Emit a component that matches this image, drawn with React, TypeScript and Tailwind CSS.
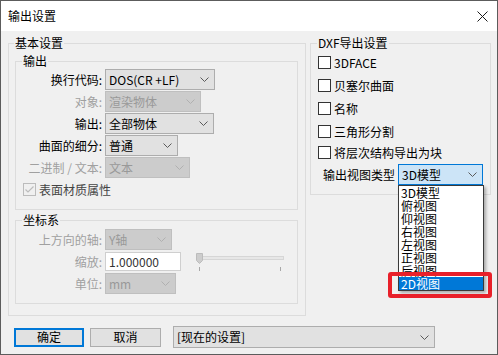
import clsx from "clsx";

function Chevron({ disabled }: { disabled?: boolean }) {
  return (
    <svg width="9" height="5" viewBox="0 0 9 5" className="shrink-0">
      <path
        d="M0.5 0.5 L4.5 4.5 L8.5 0.5"
        fill="none"
        stroke={disabled ? "#b0b0b0" : "#5a5a5a"}
        strokeWidth="1"
      />
    </svg>
  );
}

function Select({
  value,
  className,
  disabled,
}: {
  value: string;
  className: string;
  disabled?: boolean;
}) {
  return (
    <div
      className={clsx(
        "flex h-[21px] items-center justify-between border pl-[3px] pr-[5px] leading-[14px]",
        disabled
          ? "border-[#bfbfbf] bg-[#cccccc] text-[#999999]"
          : "border-[#adadad] bg-[#e1e1e1] text-black",
        className
      )}
    >
      <span>{value}</span>
      <Chevron disabled={disabled} />
    </div>
  );
}

function Row({
  label,
  disabled,
  children,
}: {
  label: string;
  disabled?: boolean;
  children: React.ReactNode;
}) {
  return (
    <div className="flex h-[21px] items-center">
      <span
        className={clsx(
          "w-[88px] pr-[2px] text-right leading-[14px]",
          disabled ? "text-[#a0a0a0]" : "text-black"
        )}
      >
        {label}
      </span>
      <div className="ml-[1px] flex items-center">{children}</div>
    </div>
  );
}

function Checkbox({ label, checked, disabled }: { label: string; checked?: boolean; disabled?: boolean }) {
  return (
    <div className="flex h-[13px] items-center gap-[3px]">
      <div
        className={clsx(
          "flex h-[13px] w-[13px] items-center justify-center border",
          disabled ? "border-[#bcbcbc] bg-[#f0f0f0]" : "border-[#333333] bg-white"
        )}
      >
        {checked && (
          <svg width="11" height="11" viewBox="0 0 11 11">
            <path d="M1.5 5.5 L4 8 L9.5 2.5" fill="none" stroke={disabled ? "#bcbcbc" : "#222"} strokeWidth="1.2" />
          </svg>
        )}
      </div>
      <span className={clsx("leading-[14px]", disabled ? "text-[#444]" : "text-black")}>{label}</span>
    </div>
  );
}

const views = ["3D模型", "俯视图", "仰视图", "右视图", "左视图", "正视图", "后视图", "2D视图"];

export default function App() {
  return (
    <div className="relative box-border h-[355px] w-[498px] overflow-hidden border border-[#5c5c5c] bg-[#f0f0f0] font-['Noto_Sans_CJK_SC',sans-serif] text-[12px] text-black">
      <div className="flex h-[30px] items-center justify-between bg-white pl-[7px] pr-[9px]">
        <span className="leading-[14px]">输出设置</span>
        <svg width="11" height="11" viewBox="0 0 11 11">
          <path d="M0.5 0.5 L10.5 10.5 M10.5 0.5 L0.5 10.5" stroke="#1a1a1a" strokeWidth="1" />
        </svg>
      </div>

      <div className="flex items-start">
        {/* 基本设置 */}
        <fieldset className="ml-[7px] mt-[5px] w-[298px] border border-[#dcdcdc] px-[6px] pb-[11px] pt-[4px]">
          <legend className="-ml-[1px] px-[1px] leading-[14px]">基本设置</legend>

          <fieldset className="w-[283px] border border-[#dcdcdc] pb-[13px] pt-[1px]">
            <legend className="ml-[6px] px-[1px] leading-[14px]">输出</legend>
            <div className="flex flex-col gap-[1px]">
              <Row label="换行代码:">
                <Select value="DOS(CR +LF)" className="w-[110px]" />
              </Row>
              <Row label="对象:" disabled>
                <Select value="渲染物体" className="w-[96px]" disabled />
              </Row>
              <Row label="输出:">
                <Select value="全部物体" className="w-[109px]" />
              </Row>
              <Row label="曲面的细分:">
                <Select value="普通" className="w-[73px]" />
              </Row>
              <Row label="二进制 / 文本:" disabled>
                <Select value="文本" className="w-[85px]" disabled />
              </Row>
            </div>
            <div className="ml-[7px] mt-[5px]">
              <Checkbox label="表面材质属性" checked disabled />
            </div>
          </fieldset>

          <fieldset className="mt-[3px] w-[283px] border border-[#dcdcdc] pb-[9px] pt-[2px]">
            <legend className="ml-[6px] px-[1px] leading-[14px]">坐标系</legend>
            <div className="flex flex-col gap-[1px]">
              <Row label="上方向的轴:" disabled>
                <Select value="Y轴" className="w-[67px]" disabled />
              </Row>
              <Row label="缩放:" disabled>
                <div className="flex h-[19px] w-[76px] items-center border border-[#cfcfcf] bg-white pl-[3px] leading-[14px] text-[#333]">
                  1.000000
                </div>
                <svg width="90" height="21" viewBox="0 0 90 21" className="ml-[15px]">
                  <rect x="2.5" y="5.5" width="85" height="3" fill="#e7e7e7" stroke="#d6d6d6" />
                  <path d="M0.5 2.5 H6.5 V9.5 L3.5 12.5 L0.5 9.5 Z" fill="#cdcdcd" stroke="#bcbcbc" />
                  <path d="M3.5 16 V20 M84.5 16 V20" stroke="#a8a8a8" />
                </svg>
              </Row>
              <Row label="单位:" disabled>
                <Select value="mm" className="w-[71px]" disabled />
              </Row>
            </div>
          </fieldset>
        </fieldset>

        {/* DXF导出设置 */}
        <fieldset className="ml-[4px] mt-[5px] w-[181px] border border-[#dcdcdc] pb-[9px] pl-[7px] pt-[6px]">
          <legend className="-ml-[1px] px-[1px] leading-[14px]">DXF导出设置</legend>
          <div className="flex flex-col gap-[10px]">
            <Checkbox label="3DFACE" />
            <Checkbox label="贝塞尔曲面" />
            <Checkbox label="名称" />
            <Checkbox label="三角形分割" />
          </div>
          <div className="mt-[8px]">
            <Checkbox label="将层次结构导出为块" />
          </div>
          <div className="mt-[5px] flex items-center">
            <span className="ml-[5px] w-[75px] leading-[14px]">输出视图类型</span>
            <div className="relative">
              <div className="flex h-[21px] w-[85px] items-center justify-between border border-[#0078d7] bg-[#cce4f7] pl-[3px] pr-[5px] leading-[14px]">
                <span>3D模型</span>
                <Chevron />
              </div>
              <div className="absolute left-0 top-[21px] z-10 w-[86px] border border-[#3a3a3a] bg-white py-0 shadow-[2px_2px_3px_rgba(0,0,0,0.3)]">
                {views.map((v) => (
                  <div
                    key={v}
                    className={clsx(
                      "h-[13px] pl-[2px] leading-[13px]",
                      v === "2D视图" ? "bg-[#0078d7] text-white" : "text-black"
                    )}
                  >
                    {v}
                  </div>
                ))}
              </div>
            </div>
          </div>
        </fieldset>
      </div>

      <div className="mt-[10px] flex items-center">
        <button className="ml-[13px] h-[19px] w-[70px] border-2 border-[#0078d7] bg-[#e1e1e1] leading-[14px]">
          确定
        </button>
        <button className="ml-[6px] h-[19px] w-[71px] border border-[#adadad] bg-[#e1e1e1] leading-[14px]">
          取消
        </button>
        <div className="ml-[12px]">
          <Select value="[现在的设置]" className="h-[22px] w-[262px]" />
        </div>
      </div>

      <div className="pointer-events-none absolute left-[387px] top-[271px] z-20 h-[26px] w-[104px] rounded-[3px] border-[4px] border-[#e8202a]" />
    </div>
  );
}
